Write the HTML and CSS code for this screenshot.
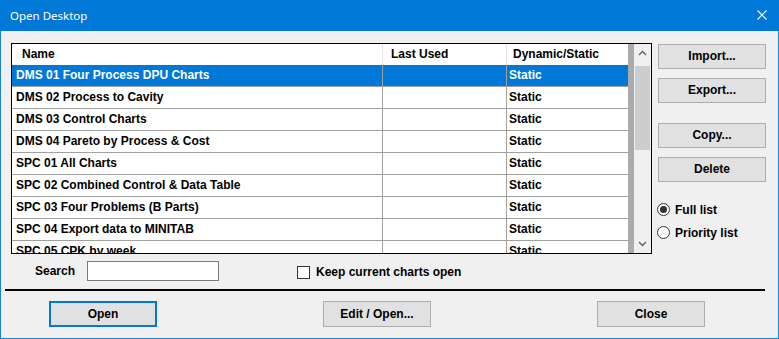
FILE: index.html
```html
<!DOCTYPE html>
<html lang="en">
<head>
    <meta charset="UTF-8">
    <title>Open Desktop</title>
    <link rel="stylesheet" href="styles.css">
</head>
<body>
    <div class="window">
        <div class="titlebar">
            <span class="title">Open Desktop</span>
            <svg class="close-x" width="10" height="10" viewBox="0 0 10 10">
                <path d="M0.5 0.5 L9.5 9.5 M9.5 0.5 L0.5 9.5" stroke="#fff" stroke-width="1.1" fill="none"/>
            </svg>
        </div>

        <div class="main">
            <div class="left">
                <div class="listbox">
                    <div class="grid">
                        <div class="row header">
                            <div class="cell c-name">Name</div>
                            <div class="cell c-used">Last Used</div>
                            <div class="cell c-type">Dynamic/Static</div>
                        </div>
                        <div class="row selected">
                            <div class="cell c-name">DMS 01 Four Process DPU Charts</div>
                            <div class="cell c-used"></div>
                            <div class="cell c-type">Static</div>
                        </div>
                        <div class="row">
                            <div class="cell c-name">DMS 02 Process to Cavity</div>
                            <div class="cell c-used"></div>
                            <div class="cell c-type">Static</div>
                        </div>
                        <div class="row">
                            <div class="cell c-name">DMS 03 Control Charts</div>
                            <div class="cell c-used"></div>
                            <div class="cell c-type">Static</div>
                        </div>
                        <div class="row">
                            <div class="cell c-name">DMS 04 Pareto by Process &amp; Cost</div>
                            <div class="cell c-used"></div>
                            <div class="cell c-type">Static</div>
                        </div>
                        <div class="row">
                            <div class="cell c-name">SPC 01 All Charts</div>
                            <div class="cell c-used"></div>
                            <div class="cell c-type">Static</div>
                        </div>
                        <div class="row">
                            <div class="cell c-name">SPC 02 Combined Control &amp; Data Table</div>
                            <div class="cell c-used"></div>
                            <div class="cell c-type">Static</div>
                        </div>
                        <div class="row">
                            <div class="cell c-name">SPC 03 Four Problems (B Parts)</div>
                            <div class="cell c-used"></div>
                            <div class="cell c-type">Static</div>
                        </div>
                        <div class="row">
                            <div class="cell c-name">SPC 04 Export data to MINITAB</div>
                            <div class="cell c-used"></div>
                            <div class="cell c-type">Static</div>
                        </div>
                        <div class="row">
                            <div class="cell c-name">SPC 05 CPK by week</div>
                            <div class="cell c-used"></div>
                            <div class="cell c-type">Static</div>
                        </div>
                    </div>
                    <div class="strip"></div>
                    <div class="scrollbar">
                        <svg class="arrow" width="9" height="6" viewBox="0 0 9 6">
                            <path d="M1 5 L4.5 1.5 L8 5" stroke="#606060" stroke-width="1.4" fill="none"/>
                        </svg>
                        <div class="track">
                            <div class="thumb"></div>
                        </div>
                        <svg class="arrow" width="9" height="6" viewBox="0 0 9 6">
                            <path d="M1 1 L4.5 4.5 L8 1" stroke="#606060" stroke-width="1.4" fill="none"/>
                        </svg>
                    </div>
                </div>

                <div class="search-row">
                    <span class="search-label">Search</span>
                    <div class="textbox"></div>
                    <span class="checkbox"></span>
                    <span class="check-label">Keep current charts open</span>
                </div>
            </div>

            <div class="right">
                <div class="btn">Import...</div>
                <div class="btn">Export...</div>
                <div class="btn btn-gap">Copy...</div>
                <div class="btn">Delete</div>
                <div class="radios">
                    <div class="radio-item"><span class="radio checked"></span>Full list</div>
                    <div class="radio-item"><span class="radio"></span>Priority list</div>
                </div>
            </div>
        </div>

        <div class="divider"></div>

        <div class="footer">
            <div class="btn btn-default">Open</div>
            <div class="btn">Edit / Open...</div>
            <div class="btn">Close</div>
        </div>
    </div>
</body>
</html>
```

FILE: styles.css
```css
body {
    margin: 0;
    background-color: #f0f0f0;
    font-family: "Liberation Sans", Arial, sans-serif;
    font-size: 12px;
    font-weight: bold;
    color: #000;
}
.window {
    width: 779px;
    height: 339px;
    box-sizing: border-box;
    border: 1px solid #1883d7;
    border-top: none;
    background-color: #f0f0f0;
}
.titlebar {
    height: 31px;
    margin: 0 -1px;
    background-color: #0078d7;
    display: flex;
    align-items: center;
    justify-content: space-between;
    padding: 0 12px 0 10px;
}
.title {
    color: #fff;
    font-family: "Noto Sans", sans-serif;
    font-weight: normal;
    font-size: 11.5px;
}
.close-x {
    margin-top: -1px;
}
.main {
    display: flex;
    gap: 6px;
    padding: 12px 0 0 10px;
}
.listbox {
    width: 641px;
    height: 211px;
    box-sizing: border-box;
    border: 1px solid #000;
    display: flex;
    overflow: hidden;
    background-color: #fff;
}
.grid {
    width: 616px;
    flex: none;
}
.row {
    display: flex;
    height: 21px;
    line-height: 21px;
    border-bottom: 1px solid #a0a0a0;
    white-space: nowrap;
}
.row.header {
    height: 21px;
    line-height: 20px;
    border-bottom: none;
}
.cell {
    box-sizing: border-box;
    border-right: 1px solid #a0a0a0;
    overflow: hidden;
}
.c-name {
    width: 371px;
    padding-left: 4px;
}
.c-used {
    width: 124px;
    padding-left: 8px;
}
.c-type {
    width: 121px;
    padding-left: 2px;
    border-right: none;
}
.header .cell {
    border-right-color: #e5e5e5;
}
.header .c-name {
    padding-left: 10px;
}
.header .c-type {
    padding-left: 6px;
}
.selected {
    background-color: #0078d7;
    color: #fff;
}
.strip {
    width: 6px;
    flex: none;
    background-color: #ababab;
}
.scrollbar {
    width: 17px;
    flex: none;
    background-color: #f0f0f0;
    display: flex;
    flex-direction: column;
    align-items: center;
}
.arrow {
    margin: 6px 0;
}
.track {
    flex: 1;
    width: 100%;
    padding-top: 4px;
}
.thumb {
    margin: 0 1px;
    height: 84px;
    background-color: #cdcdcd;
}
.search-row {
    display: flex;
    align-items: center;
    height: 20px;
    margin-top: 7px;
}
.search-label {
    width: 52px;
    padding-left: 24px;
}
.textbox {
    width: 132px;
    height: 20px;
    box-sizing: border-box;
    border: 1px solid #7a7a7a;
    background-color: #fff;
}
.checkbox {
    width: 13px;
    height: 13px;
    box-sizing: border-box;
    border: 1px solid #333;
    background-color: #fff;
    margin-left: 78px;
    margin-top: 3px;
}
.check-label {
    margin-left: 6px;
    margin-top: 2px;
}
.right {
    display: flex;
    flex-direction: column;
    gap: 9px;
    padding-top: 1px;
}
.btn {
    width: 108px;
    height: 25px;
    box-sizing: border-box;
    border: 1px solid #adadad;
    background-color: #e1e1e1;
    text-align: center;
    line-height: 23px;
}
.btn-gap {
    margin-top: 11px;
}
.btn-default {
    border: 2px solid #0078d7;
    line-height: 22px;
}
.radios {
    display: flex;
    flex-direction: column;
    gap: 10px;
    margin-top: 12px;
    margin-left: -1px;
}
.radio-item {
    display: flex;
    align-items: center;
    height: 13px;
}
.radio {
    width: 13px;
    height: 13px;
    box-sizing: border-box;
    border: 1px solid #333;
    border-radius: 50%;
    background-color: #fff;
    margin-right: 5px;
    position: relative;
}
.radio.checked::after {
    content: "";
    position: absolute;
    left: 2px;
    top: 2px;
    width: 7px;
    height: 7px;
    border-radius: 50%;
    background-color: #333;
}
.divider {
    height: 2px;
    width: 760px;
    margin: 8px 0 0 4px;
    background-color: #000;
}
.footer {
    display: flex;
    gap: 166px;
    padding: 10px 0 0 48px;
}
.footer .btn {
    height: 26px;
    line-height: 24px;
}
.footer .btn-default {
    line-height: 22px;
}
```
